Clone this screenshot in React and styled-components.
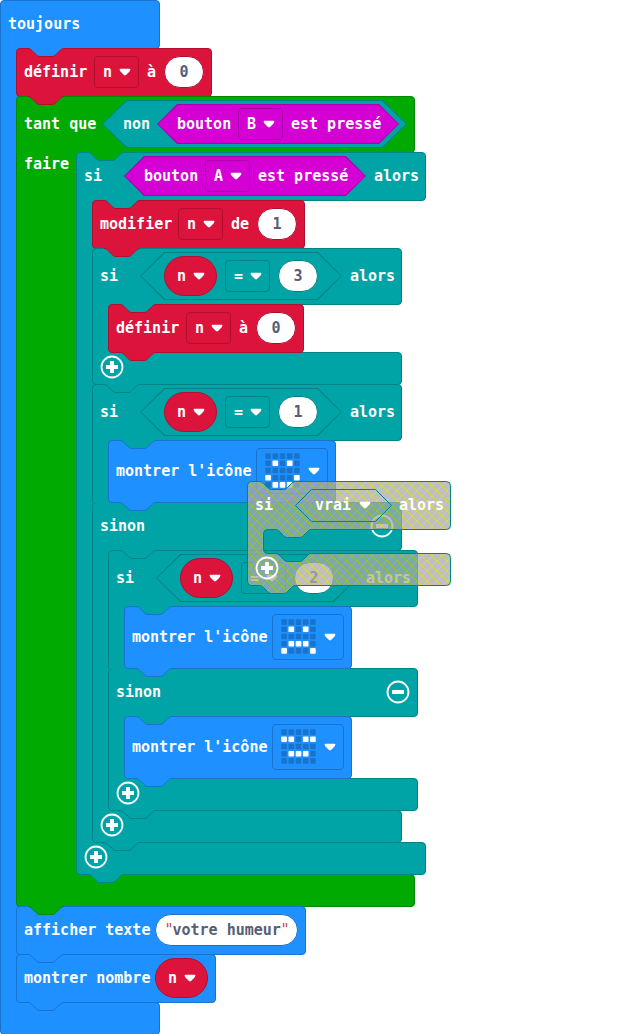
import React from 'react';
import styled, { createGlobalStyle, css } from 'styled-components';

const Page = createGlobalStyle`
  *, *::before, *::after { box-sizing: border-box; }
  body {
    margin: 0;
    background: #fff;
    font: bold 15px/20px "DejaVu Sans Mono", "Liberation Mono", monospace;
    color: #fff;
  }
  button, input, select { font: inherit; color: inherit; margin: 0; }
`;

const tones = {
  basic: { fill: '#1e90ff', line: '#1873cc' },
  variables: { fill: '#dc143c', line: '#b01030' },
  loops: { fill: '#00aa00', line: '#008800' },
  logic: { fill: '#00a4a6', line: '#008385' },
  input: { fill: '#d400d4', line: '#aa00aa' },
};

const surface = css`
  background: ${(p) => tones[p.$tone].fill};
  border: 1px solid ${(p) => tones[p.$tone].line};
`;

const Workspace = styled.main`
  position: relative;
  min-height: 100vh;
`;

const Group = styled.section`
  position: relative;
  width: max-content;
`;

const Bar = styled.div`
  ${surface}
  position: relative;
  display: flex;
  align-items: center;
  gap: 8px;
  width: max-content;
  min-width: ${(p) => p.$min || 0}px;
  height: ${(p) => (p.$height || 48) + 1}px;
  margin-bottom: -1px;
  padding: 0 7px 1px;
  border-radius: 4px;
  border-bottom-left-radius: ${(p) => (p.$open ? 0 : 4)}px;
`;

const Foot = styled(Bar)`
  width: 100%;
  align-items: flex-start;
  border-radius: 0 4px 4px 4px;
`;

/* Middle and bottom bars share the width of the bar at the top. */
const Shell = styled.div`
  width: ${(p) => p.$width}px;
`;

const Body = styled.div`
  display: flex;
`;

const Arm = styled.div`
  position: relative;
  z-index: 1;
  flex: none;
  width: ${(p) => p.$width + 4}px;
  margin: 0 -4px -1px 0;
  padding: 2px 0 0 7px;
  background: ${(p) => tones[p.$tone].fill};
  border-left: 1px solid ${(p) => tones[p.$tone].line};
`;

const Stack = styled.div`
  position: relative;
  z-index: 1;
`;

const TabShape = styled.svg`
  position: absolute;
  z-index: 2;
  left: 12px;
  ${(p) => (p.$edge === 'top' ? 'top: 0' : 'bottom: -9px')};
  display: block;
  overflow: visible;
`;

const Text = styled.span`
  display: flex;
  white-space: pre;
`;

const Keyword = styled.span`
  width: 32px;
`;

const Hexagon = styled.div`
  --d: ${(p) => p.$depth}px;
  position: relative;
  isolation: isolate;
  display: flex;
  align-items: center;
  gap: 8px;
  height: ${(p) => p.$depth * 2}px;
  padding: 0 ${(p) => p.$right ?? p.$depth}px 0 ${(p) => p.$left ?? p.$depth}px;
  background: ${(p) => tones[p.$tone].line};
  clip-path: polygon(0 50%, var(--d) 0, calc(100% - var(--d)) 0, 100% 50%, calc(100% - var(--d)) 100%, var(--d) 100%);

  &::before {
    content: '';
    position: absolute;
    z-index: -1;
    inset: 1px;
    background: ${(p) => tones[p.$tone].fill};
    clip-path: polygon(0 50%, var(--d) 0, calc(100% - var(--d)) 0, 100% 50%, calc(100% - var(--d)) 100%, var(--d) 100%);
  }
`;

const Field = styled.label`
  ${surface}
  position: relative;
  display: flex;
  align-items: center;
  width: 45px;
  height: 32px;
  border-radius: 4px;
`;

const VariablePill = styled(Field)`
  width: 53px;
  height: 40px;
  padding-left: 4px;
  border-radius: 20px;
`;

const Select = styled.select`
  width: 100%;
  height: 100%;
  padding: 0 0 0 8px;
  border: 0;
  background: none;
  appearance: none;
  outline: none;
`;

const Caret = styled.svg`
  position: absolute;
  right: ${(p) => p.$right || 7}px;
  pointer-events: none;
`;

const Value = styled.input`
  width: 40px;
  height: 32px;
  padding: 0;
  border: 1px solid ${(p) => tones[p.$tone].line};
  border-radius: 16px;
  background: #fff;
  color: #575e75;
  text-align: center;
  outline: none;
`;

const Quoted = styled.label`
  display: flex;
  justify-content: center;
  align-items: center;
  width: 143px;
  height: 32px;
  border: 1px solid #1873cc;
  border-radius: 16px;
  background: #fff;
  color: #575e75;
`;

const QuotedInput = styled.input`
  width: 108px;
  padding: 0;
  border: 0;
  background: none;
  outline: none;
`;

const Quote = styled.span`
  width: 8px;
  color: #c0504d;
  font-weight: normal;
  line-height: 24px;
`;

const IconField = styled.button`
  ${surface}
  position: relative;
  display: flex;
  align-items: center;
  width: 72px;
  height: 46px;
  padding: 0 0 0 8px;
  border-radius: 4px;
`;

const RoundButton = styled.button`
  display: block;
  width: 24px;
  height: 24px;
  padding: 0;
  border: 0;
  background: none;
  margin: ${(p) => (p.$end ? '0 0 0 auto' : '2px 0 0')};
`;

const Ghost = styled.section`
  position: absolute;
  z-index: 5;
  top: 481px;
  left: 247px;
  width: 204px;
  height: 113px;
`;

const GhostShape = styled.svg`
  position: absolute;
  inset: 0;
  z-index: -1;
  overflow: visible;
`;

const GhostHead = styled.div`
  display: flex;
  align-items: center;
  gap: 8px;
  height: 48px;
  padding-left: 8px;
`;

const GhostChoice = styled.label`
  position: relative;
  display: flex;
  align-items: center;
  width: 96px;
  height: 32px;
`;

const GhostSelect = styled(Select)`
  padding-left: 20px;
`;

const GhostFoot = styled.div`
  padding: 25px 0 0 8px;
`;

const NOTCH = 'c2 0 3 1 4 2l4 4c1 1 2 2 4 2h12c2 0 3-1 4-2l4-4c1-1 2-2 4-2';

function Tab({ tone, line = tone, edge }) {
  return (
    <TabShape $edge={edge} width="36" height="10" aria-hidden="true">
      <path d={`M0 0V.5${NOTCH}V0Z`} fill={tones[tone].fill} />
      <path d={`M0 .5${NOTCH}`} fill="none" stroke={tones[line].line} />
    </TabShape>
  );
}

/* Labels take up 44px for every five characters, rounded to whole pixels. */
function Label({ children }) {
  return <Text style={{ width: Math.round((children.length * 44) / 5) }}>{children}</Text>;
}

function Arrow({ right }) {
  return (
    <Caret $right={right} width="12" height="8" aria-hidden="true">
      <path d="M1.500.8h9q1.200 0 .8 1.200-.4 1.200-1.500 2.200L7 7q-1 .8-2 0L2.200 4.200Q1.100 3.200.7 2 .3.8 1.500.8Z" fill="#fff" />
    </Caret>
  );
}

function Dropdown({ tone, value, name }) {
  return (
    <Field $tone={tone}>
      <Select aria-label={name} defaultValue={value}>
        <option>{value}</option>
      </Select>
      <Arrow />
    </Field>
  );
}

function Variable() {
  return (
    <VariablePill $tone="variables">
      <Select aria-label="variable" defaultValue="n">
        <option>n</option>
      </Select>
      <Arrow right={11} />
    </VariablePill>
  );
}

function Circle({ minus, end }) {
  return (
    <RoundButton $end={end} type="button" aria-label={minus ? 'retirer' : 'ajouter'}>
      <svg width="24" height="24" fill="none" stroke="#fff" aria-hidden="true">
        <circle cx="12" cy="12" r="10.5" strokeWidth="1.8" />
        <path d={minus ? 'M6 12h12' : 'M6 12h12M12 6v12'} strokeWidth="4" />
      </svg>
    </RoundButton>
  );
}

function Leds({ rows }) {
  return (
    <svg width="36" height="36" aria-hidden="true">
      {rows.flatMap((row, y) =>
        [...row].map((c, x) => (
          <rect
            key={`${x}-${y}`}
            x={x * 7.2 + 0.3}
            y={y * 7.2 + 0.3}
            width="5.6"
            height="5.6"
            rx=".8"
            fill={c === '#' ? '#fff' : '#1873cc'}
          />
        )),
      )}
    </svg>
  );
}

function Block({ tone, children, height }) {
  return (
    <Group>
      <Bar $tone={tone} $height={height}>{children}</Bar>
      <Tab tone={tone} />
    </Group>
  );
}

function Nest({ tone, arm = 16, armText, childLine, children }) {
  return (
    <Body>
      <Arm $tone={tone} $width={arm}>{armText}</Arm>
      <Stack>
        <Tab tone={tone} line={childLine} edge="top" />
        {children}
      </Stack>
    </Body>
  );
}

function Set() {
  return (
    <Block tone="variables">
      <Label>définir</Label>
      <Dropdown tone="variables" value="n" name="variable" />
      <Label>à</Label>
      <Value $tone="variables" aria-label="valeur" defaultValue="0" />
    </Block>
  );
}

function ShowIcon({ rows, name }) {
  return (
    <Block tone="basic" height={62}>
      <Label>montrer l'icône</Label>
      <IconField $tone="basic" type="button" aria-label={name}>
        <Leds rows={rows} />
        <Arrow />
      </IconField>
    </Block>
  );
}

function If({ width, height, condition, childLine, children, otherwise }) {
  return (
    <Group>
      <Shell $width={width}>
        <Bar $tone="logic" $height={height} $min={width} $open>
          <Keyword>si</Keyword>
          {condition}
          <Label>alors</Label>
        </Bar>
      </Shell>
      <Nest tone="logic" childLine={childLine}>{children}</Nest>
      {otherwise && (
        <>
          <Shell $width={width}>
            <Bar $tone="logic" $min={width} $open>
              <Label>sinon</Label>
              <Circle minus end />
            </Bar>
          </Shell>
          <Nest tone="logic" childLine={otherwise.line}>{otherwise.content}</Nest>
        </>
      )}
      <Shell $width={width}>
        <Foot $tone="logic" $height={32}>
          <Circle />
        </Foot>
      </Shell>
      <Tab tone="logic" />
    </Group>
  );
}

function Compare({ value }) {
  return (
    <Hexagon $tone="logic" $depth={24}>
      <Variable />
      <Dropdown tone="logic" value="=" name="comparaison" />
      <Value $tone="logic" aria-label="valeur" defaultValue={value} />
    </Hexagon>
  );
}

function Pressed({ button }) {
  return (
    <Hexagon $tone="input" $depth={20}>
      <Label>bouton</Label>
      <Dropdown tone="input" value={button} name="bouton" />
      <Label>est pressé</Label>
    </Hexagon>
  );
}

function DraggedIf() {
  return (
    <Ghost>
      <GhostShape width="204" height="113" aria-hidden="true">
        <defs>
          <pattern id="disabled" width="10" height="10" patternUnits="userSpaceOnUse">
            <rect width="10" height="10" fill="#aaa" />
            <path d="M0 0l10 10M10 0L0 10" stroke="#cc0" />
          </pattern>
        </defs>
        <path
          d={`M.5 4.5q0-4 4-4h8${NOTCH}H199.500q4 0 4 4v40q0 4-4 4H64.500c-2 0-3 1-4 2l-4 4c-1 1-2 2-4 2h-12c-2 0-3-1-4-2l-4-4c-1-1-2-2-4-2h-8q-4 0-4 4v16q0 4 4 4h8${NOTCH}H199.500q4 0 4 4v24q0 4-4 4H48.500c-2 0-3 1-4 2l-4 4c-1 1-2 2-4 2h-12c-2 0-3-1-4-2l-4-4c-1-1-2-2-4-2h-8q-4 0-4-4Z`}
          fill="url(#disabled)"
          fillOpacity=".75"
          stroke="#008385"
        />
        <path d="M48.500 24.500l16-16h64l16 16-16 16h-64Z" fill="none" stroke="#008385" />
      </GhostShape>
      <GhostHead>
        <Keyword>si</Keyword>
        <GhostChoice>
          <GhostSelect aria-label="condition" defaultValue="vrai">
            <option>vrai</option>
          </GhostSelect>
          <Arrow right={20} />
        </GhostChoice>
        <Label>alors</Label>
      </GhostHead>
      <GhostFoot>
        <Circle />
      </GhostFoot>
    </Ghost>
  );
}

const happy = ['.....', '.#.#.', '.....', '#...#', '.###.'];
const sad = ['.....', '.#.#.', '.....', '.###.', '#...#'];
const asleep = ['.....', '##.##', '.....', '.###.', '.....'];

export default function App() {
  return (
    <Workspace>
      <Page />
      <Group>
        <Shell $width={160}>
          <Bar $tone="basic" $min={160} $open>
            <Label>toujours</Label>
          </Bar>
        </Shell>
        <Nest tone="basic" childLine="variables">
          <Set />
          <Group>
            <Shell $width={399}>
              <Bar $tone="loops" $height={56} $min={399} $open>
                <Label>tant que</Label>
                <Hexagon $tone="logic" $depth={24} $left={21} $right={8}>
                  <Label>non</Label>
                  <Pressed button="B" />
                </Hexagon>
              </Bar>
            </Shell>
            <Nest tone="loops" arm={60} armText={<Label>faire</Label>} childLine="logic">
              <If width={350} condition={<Pressed button="A" />} childLine="variables">
                <Block tone="variables">
                  <Label>modifier</Label>
                  <Dropdown tone="variables" value="n" name="variable" />
                  <Label>de</Label>
                  <Value $tone="variables" aria-label="valeur" defaultValue="1" />
                </Block>
                <If width={310} height={56} condition={<Compare value="3" />} childLine="variables">
                  <Set />
                </If>
                <If
                  width={310}
                  height={56}
                  condition={<Compare value="1" />}
                  childLine="basic"
                  otherwise={{
                    line: 'logic',
                    content: (
                      <If
                        width={310}
                        height={56}
                        condition={<Compare value="2" />}
                        childLine="basic"
                        otherwise={{
                          line: 'basic',
                          content: <ShowIcon rows={asleep} name="endormi" />,
                        }}
                      >
                        <ShowIcon rows={sad} name="triste" />
                      </If>
                    ),
                  }}
                >
                  <ShowIcon rows={happy} name="content" />
                </If>
              </If>
            </Nest>
            <Shell $width={399}>
              <Foot $tone="loops" $height={32} />
            </Shell>
            <Tab tone="loops" />
          </Group>
          <Block tone="basic">
            <Label>afficher texte</Label>
            <Quoted>
              <Quote>"</Quote>
              <QuotedInput aria-label="texte" defaultValue="votre humeur" />
              <Quote>"</Quote>
            </Quoted>
          </Block>
          <Block tone="basic">
            <Label>montrer nombre</Label>
            <Variable />
          </Block>
        </Nest>
        <Shell $width={160}>
          <Foot $tone="basic" $height={32} />
        </Shell>
      </Group>
      <DraggedIf />
    </Workspace>
  );
}
